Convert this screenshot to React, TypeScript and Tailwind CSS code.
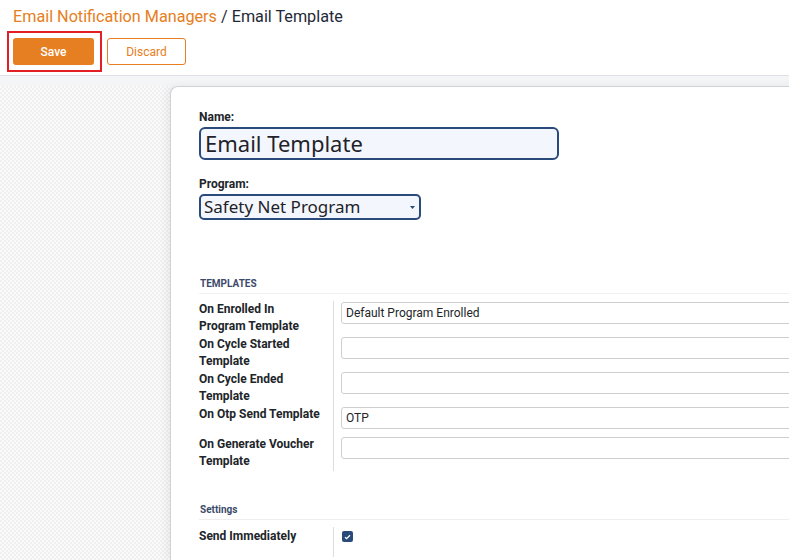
import React from "react";

const rows: { label: string[]; value: string; h: string }[] = [
  { label: ["On Enrolled In", "Program Template"], value: "Default Program Enrolled", h: "h-[35px]" },
  { label: ["On Cycle Started", "Template"], value: "", h: "h-[35px]" },
  { label: ["On Cycle Ended", "Template"], value: "", h: "h-[35px]" },
  { label: ["On Otp Send Template"], value: "OTP", h: "h-[30px]" },
  { label: ["On Generate Voucher", "Template"], value: "", h: "h-[35px]" },
];

export default function App() {
  return (
    <div className="w-[789px] h-[560px] overflow-hidden bg-white font-['Roboto',sans-serif] text-[#212529]">
      {/* Header */}
      <div className="h-[76px] border-b border-[#dee2e6] px-[13px] pt-[7px]">
        <div className="text-[16.2px] leading-[20px]">
          <span className="text-[#e67e22]">Email Notification Managers</span>
          <span className="text-[#1f2937]"> / Email Template</span>
        </div>
        <div className="mt-[11px] flex items-center gap-[13px]">
          <div className="relative">
            <div className="pointer-events-none absolute -left-[6px] -top-[7px] h-[41px] w-[95px] border-2 border-[#e31e24]" />
            <button className="h-[27px] w-[81px] rounded-[3px] bg-[#e67e22] text-[12px] font-medium text-white">
              Save
            </button>
          </div>
          <button className="h-[27px] w-[79px] rounded-[3px] border border-[#e67e22] bg-white text-[12px] text-[#e67e22]">
            Discard
          </button>
        </div>
      </div>

      {/* Body */}
      <div className="h-[10px] bg-[#f4f5f7]" />
      <div className="flex h-[474px] bg-[#f4f5f7]">
        <div className="w-[170px] shrink-0 bg-[image:repeating-conic-gradient(#f0f0f0_0_25%,#fafafa_0_50%)] bg-[length:4px_4px]" />
        <div className="flex-1 rounded-tl-[8px] border-l border-t border-[#cfd2d6] bg-white pl-[28px] pt-[22px] shadow-[-4px_0_8px_rgba(0,0,0,0.06)]">
          <div className="text-[12px] font-bold leading-[16px]">Name:</div>
          <div className="mt-[2px] flex h-[33px] w-[360px] items-center rounded-[6px] border-2 border-[#2b4a7c] bg-[#f3f7fd] px-[4px] font-['Noto_Sans',sans-serif] text-[22px] text-[#1f2329]">
            Email Template
          </div>

          <div className="mt-[16px] text-[12px] font-bold leading-[16px]">Program:</div>
          <div className="mt-[2px] flex h-[26px] w-[222px] items-center justify-between rounded-[5px] border-2 border-[#2b4a7c] bg-[#f3f7fd] pl-[3px] pr-[4px] font-['Noto_Sans',sans-serif] text-[17px] text-[#1f2329]">
            <span>Safety Net Program</span>
            <svg width="5" height="3" viewBox="0 0 5 3">
              <path d="M0 0h5L2.5 3z" fill="#2b4a7c" />
            </svg>
          </div>

          <div className="mt-[58px] border-b border-[#f0f0f0] pb-[3px] pl-[1px] text-[10px] font-bold uppercase leading-[12px] text-[#3d4b6b]">
            Templates
          </div>

          <div className="mt-[7px] flex flex-col">
            {rows.map((r, i) => (
              <div key={i} className={`flex ${r.h}`}>
                <div className="w-[135px] shrink-0 border-r border-[#dcdcdc] text-[12px] font-bold leading-[17px]">
                  {r.label.map((l) => (
                    <div key={l}>{l}</div>
                  ))}
                </div>
                <div className="flex-1 pl-[7px] pt-[1px]">
                  <div className="flex h-[22px] w-[600px] items-center rounded-[3px] border border-[#cfcfcf] bg-white px-[4px] text-[12px] text-[#212529]">
                    {r.value}
                  </div>
                </div>
              </div>
            ))}
          </div>

          <div className="mt-[33px] border-b border-[#eeeeee] pb-[3px] pl-[1px] text-[10px] font-bold leading-[12px] text-[#3d4b6b]">
            Settings
          </div>
          <div className="mt-[7px] flex h-[30px]">
            <div className="w-[135px] shrink-0 border-r border-[#dcdcdc] pt-[1px] text-[12px] font-bold leading-[17px]">
              Send Immediately
            </div>
            <div className="pl-[8px] pt-[4px]">
              <div className="flex h-[11px] w-[11px] items-center justify-center rounded-[2px] bg-[#2b4a7c]">
                <svg width="7" height="6" viewBox="0 0 7 6">
                  <path d="M1 3.2l1.6 1.5L6 1.2" stroke="white" strokeWidth="1.3" fill="none" />
                </svg>
              </div>
            </div>
          </div>
        </div>
      </div>
    </div>
  );
}
